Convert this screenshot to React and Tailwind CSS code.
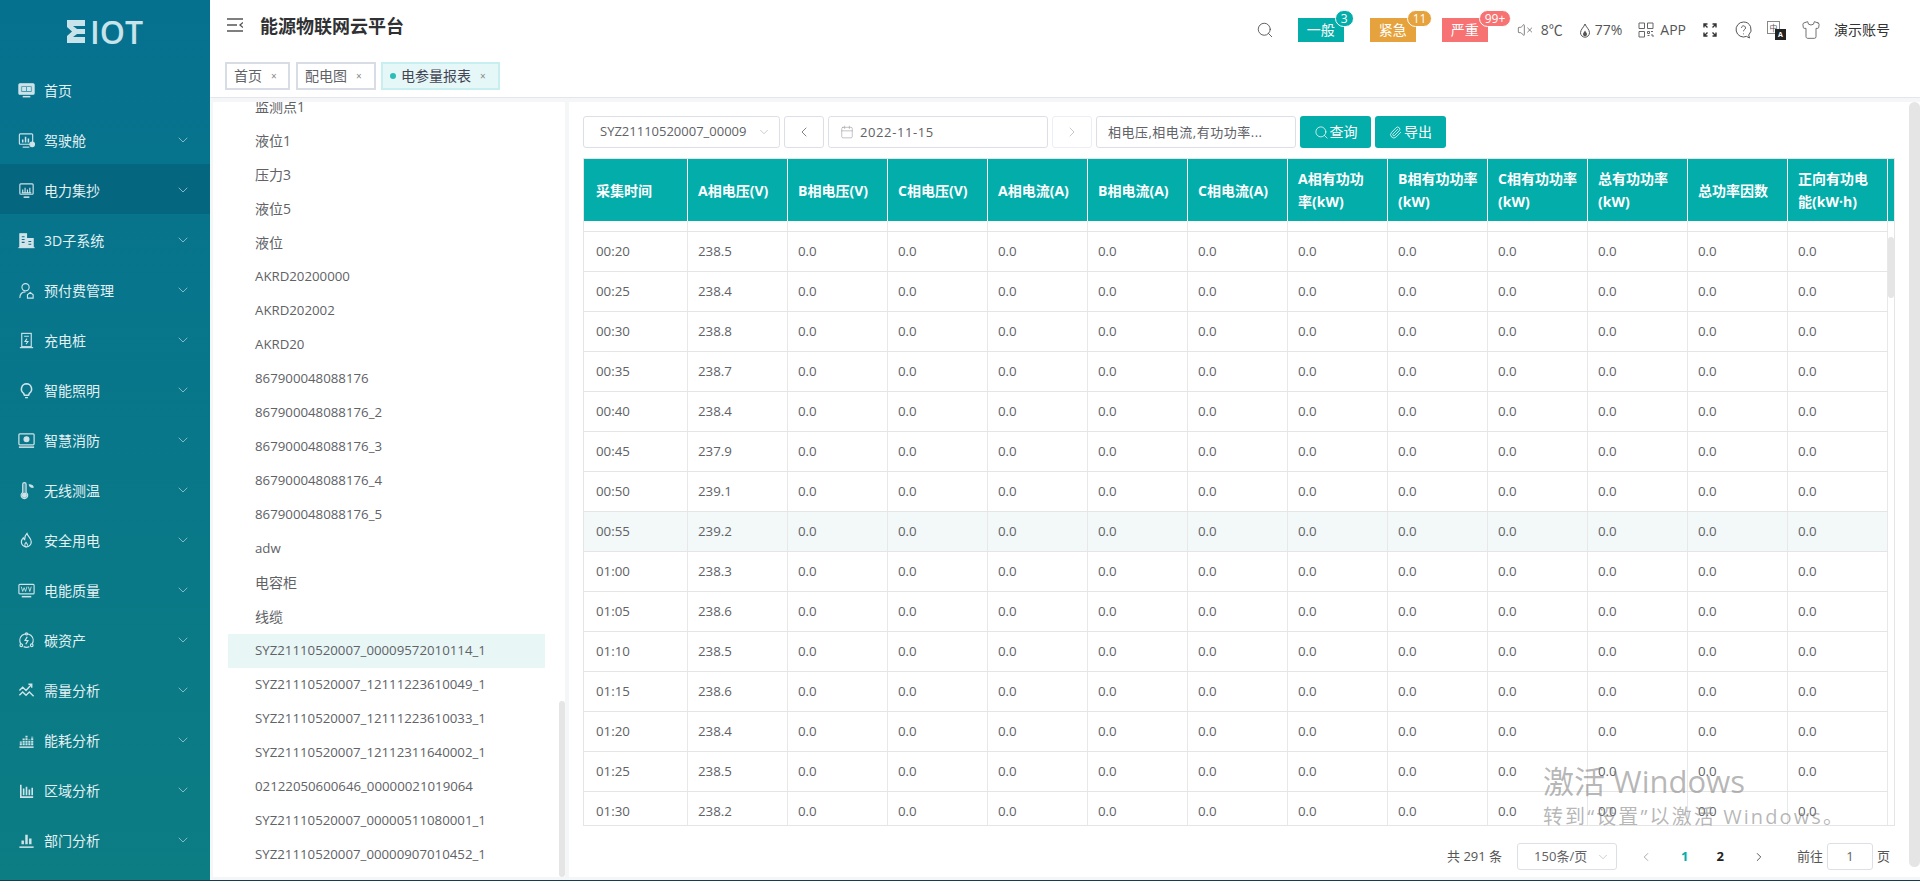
import React from "react";
import { ChevronDown, ChevronLeft, ChevronRight, Calendar, Search, VolumeX, Shirt, Paperclip } from "lucide-react";

const FONT = "font-['Open_Sans','Noto_Sans_CJK_SC',sans-serif]";

const icons = {
  home: (
    <>
      <rect x="2" y="3" width="16" height="11" rx="1" fill="currentColor" />
      <rect x="4" y="5" width="12" height="7" fill="#2b8aa3" />
      <path d="M6 7h3v3H6zM11 7h3v3h-3z" fill="currentColor" />
      <path d="M6 16.500h8" strokeWidth="1.6" />
    </>
  ),
  cockpit: (
    <>
      <rect x="2.500" y="3" width="14" height="11" rx="1" />
      <path d="M6 12V9M9 12V6M12 12V8" strokeWidth="1.6" />
      <circle cx="16" cy="14" r="2.400" fill="currentColor" />
      <path d="M6 17h7" />
    </>
  ),
  meter: (
    <>
      <rect x="3" y="3" width="14" height="11" rx="1" />
      <path d="M6 12V9M8.500 12V7M11 12V9M13.500 12V7M5 12.500h10" />
      <path d="M7 17h6" strokeWidth="1.6" />
    </>
  ),
  building: (
    <>
      <path d="M3 17V3h7v14zM10 17V8h7v9z" fill="currentColor" />
      <path d="M5 6h3M5 9h3M5 12h3M12 11h3M12 14h3" stroke="#0a7089" />
      <path d="M1.500 17.500h17" />
    </>
  ),
  user: (
    <>
      <circle cx="9" cy="6.500" r="3.800" />
      <path d="M3 18c0-4 2.500-6.500 6-6.500" />
      <path d="M11 18v-3.500l3-2.500 3 2.500V18z" />
    </>
  ),
  charger: (
    <>
      <rect x="5" y="2.500" width="10" height="14" />
      <path d="M7.500 5.500h5M10.500 8l-2 3h3l-2 3" />
      <path d="M3 17.500h14" />
    </>
  ),
  bulb: (
    <>
      <path d="M10 3a5.500 5.500 0 0 0-3 10l.8 2h4.400l.8-2a5.500 5.500 0 0 0-3-10z" strokeWidth="1.6" />
      <path d="M8.500 17.500h3" strokeWidth="1.4" />
    </>
  ),
  fire: (
    <>
      <rect x="2" y="3" width="16" height="11.500" rx="1" strokeWidth="1.3" />
      <circle cx="10" cy="8.700" r="2.600" fill="currentColor" />
      <path d="M2 17h16" strokeWidth="1.6" />
    </>
  ),
  temp: (
    <>
      <path d="M6 3.500a1.800 1.800 0 0 1 3.600 0v8.500a3.500 3.500 0 1 1-3.600 0z" fill="currentColor" fillOpacity="0.35" />
      <circle cx="7.800" cy="15" r="2" fill="currentColor" />
      <path d="M13 4c2 0 3.500.8 4 2.500-2 .5-3.500-.5-4-2.500z" fill="currentColor" />
    </>
  ),
  safe: (
    <>
      <path d="M10.500 2.500c.5 3 4.500 4.500 4.500 9a5.200 5.200 0 0 1-10.400 0c0-2 1-3.200 2-4.200.3 1 .7 1.500 1.400 1.800 0-2.600.8-5 2.500-6.600z" strokeWidth="1.3" />
      <path d="M10 17c-2-.5-2.500-3-.5-5 .8 1 2 2 1.500 3.500" strokeWidth="1.1" />
    </>
  ),
  power: (
    <>
      <rect x="2" y="3.500" width="16" height="10" rx="1" />
      <path d="M4.500 6l1.500 5 1.500-4 1.500 4 1.500-5M12 6l1.500 5L15 6" strokeWidth="0.9" />
      <path d="M5 16.500h10" strokeWidth="1.6" />
    </>
  ),
  carbon: (
    <>
      <path d="M4 13.500a7 7 0 1 1 12 0M7 16.500a7 7 0 0 0 6 0" strokeWidth="1.3" />
      <path d="M10.800 6l-2.300 4h3l-2.300 4" strokeWidth="1.3" />
      <circle cx="4.500" cy="15" r="1.400" />
      <circle cx="15.500" cy="15" r="1.400" />
      <circle cx="10" cy="3" r="1.200" />
    </>
  ),
  demand: (
    <path d="M2.500 10l3.500-3.500 3.500 3.500 5.500-6M12 3.500h3.500V7M2.500 15l3.500-3.500 3.500 3.500 3.500-3.500 4.500 4.500" strokeWidth="1.5" />
  ),
  energy: (
    <>
      <path d="M4 15v-4M7 15V8M10 15V5M13 15V9M16 15V6" strokeWidth="2.200" strokeDasharray="2 0.7" />
      <path d="M2.500 17h15" strokeWidth="1.6" />
    </>
  ),
  area: <path d="M4 4v13h13M7 15V8M10 15V6M13 15V9M16 15V7" strokeWidth="1.7" />,
  dept: (
    <>
      <path d="M6 14v-4M10 14V4M14 14V8" strokeWidth="2.600" />
      <path d="M2.500 17h15" strokeWidth="1.600" />
    </>
  ),
};

const menu = [
  ["首页", "home", false],
  ["驾驶舱", "cockpit", true],
  ["电力集抄", "meter", true],
  ["3D子系统", "building", true],
  ["预付费管理", "user", true],
  ["充电桩", "charger", true],
  ["智能照明", "bulb", true],
  ["智慧消防", "fire", true],
  ["无线测温", "temp", true],
  ["安全用电", "safe", true],
  ["电能质量", "power", true],
  ["碳资产", "carbon", true],
  ["需量分析", "demand", true],
  ["能耗分析", "energy", true],
  ["区域分析", "area", true],
  ["部门分析", "dept", true],
];

const treeItems = [
  "监测点1", "液位1", "压力3", "液位5", "液位",
  "AKRD20200000", "AKRD202002", "AKRD20",
  "867900048088176", "867900048088176_2", "867900048088176_3", "867900048088176_4", "867900048088176_5",
  "adw", "电容柜", "线缆",
  "SYZ21110520007_00009572010114_1",
  "SYZ21110520007_12111223610049_1",
  "SYZ21110520007_12111223610033_1",
  "SYZ21110520007_12112311640002_1",
  "02122050600646_00000021019064",
  "SYZ21110520007_00000511080001_1",
  "SYZ21110520007_00000907010452_1",
];

const columns = [
  "采集时间", "A相电压(V)", "B相电压(V)", "C相电压(V)", "A相电流(A)", "B相电流(A)", "C相电流(A)",
  "A相有功功\n率(kW)", "B相有功功率\n(kW)", "C相有功功率\n(kW)", "总有功功率\n(kW)", "总功率因数", "正向有功电\n能(kW·h)",
];

const rows = [
  ["00:20", "238.5"], ["00:25", "238.4"], ["00:30", "238.8"], ["00:35", "238.7"], ["00:40", "238.4"],
  ["00:45", "237.9"], ["00:50", "239.1"], ["00:55", "239.2"], ["01:00", "238.3"], ["01:05", "238.6"],
  ["01:10", "238.5"], ["01:15", "238.6"], ["01:20", "238.4"], ["01:25", "238.5"], ["01:30", "238.2"],
];

const Sidebar = () => (
  <aside className="w-[210px] shrink-0 bg-gradient-to-b from-[#06718f] to-[#0c7d83] text-[#e3f0f4] text-sm">
    <div className="h-[64px] flex items-start pl-[67px] pt-[20px]">
      <svg width="18" height="23" viewBox="0 0 18 23" className="text-[#c8e3ea]">
        <path d="M0 0h18v6H6l4 3h8v5h-8l-4 3h12v6H0v-7l5-4.500L0 7z" fill="currentColor" />
      </svg>
      <span className="ml-[5px] font-semibold text-[32px] leading-[23px] text-[#c8e3ea]">IOT</span>
    </div>
    {menu.map(([label, icon, more]) => (
      <div key={label} className={`h-[50px] flex items-center pl-[17px] pr-[19px] pt-[3px] ${label === "电力集抄" ? "bg-[#05677f]" : ""}`}>
        <svg width="19" height="19" viewBox="0 0 20 20" fill="none" stroke="currentColor" strokeWidth="1.2" className="shrink-0 text-[#cfe3e9]">
          {icons[icon]}
        </svg>
        <span className="ml-[8px] flex-1">{label}</span>
        {more && <ChevronDown size={16} strokeWidth={1.25} className="text-[#9cc7d2] -mt-[1px]" />}
      </div>
    ))}
  </aside>
);

const Badge = ({ label, count, color, className }) => (
  <div className={`relative w-[46px] h-[24px] flex items-center justify-center text-sm text-white ${color} ${className}`}>
    {label}
    <span className={`absolute -top-[8px] left-[37px] h-[17px] min-w-[19px] px-[5px] rounded-full border border-white text-xs leading-[15px] text-center whitespace-nowrap ${color}`}>
      {count}
    </span>
  </div>
);

const TopBar = () => (
  <div className="h-[62px] flex items-start pl-[17px] pr-[30px]">
    <svg width="16" height="14" viewBox="0 0 16 14" fill="none" stroke="#555" strokeWidth="1.3" className="mt-[18px]">
      <path d="M0 1h16M0 7h10M0 13h16M16 4.500L13 7l3 2.500" />
    </svg>
    <h1 className="ml-[17px] mt-[14px] text-lg leading-[24px] font-bold text-[#303133]">能源物联网云平台</h1>
    <div className="ml-auto flex items-center h-[62px] -mt-[1px] text-sm text-[#555]">
      <Search size={18} strokeWidth={1.1} className="text-[#444]" />
      <Badge label="一般" count="3" color="bg-[#03adaa]" className="ml-[24px]" />
      <Badge label="紧急" count="11" color="bg-[#e6a23c]" className="ml-[26px]" />
      <Badge label="严重" count="99+" color="bg-[#f77272]" className="ml-[26px]" />
      <VolumeX size={16} strokeWidth={1.1} className="ml-[29px]" />
      <span className="ml-[8px]">8℃</span>
      <svg width="12" height="15" viewBox="0 0 12 15" fill="none" stroke="#555" className="ml-[16px]">
        <path d="M6 1C5 4 1.500 6.500 1.500 9.700a4.500 4.500 0 0 0 9 0C10.500 6.500 7 4 6 1z" />
        <path d="M6 7.500c-.7 1.500-2 2.300-2 3.700a2 2 0 0 0 4 0C8 9.800 6.700 9 6 7.500z" fill="#555" stroke="none" />
      </svg>
      <span className="ml-[4px]">77%</span>
      <svg width="16" height="16" viewBox="0 0 16 16" fill="none" stroke="#666" className="ml-[16px]">
        <path d="M1 1h5.500v5.500H1zM9.500 1H15v5.500H9.500zM1 9.500h5.500V15H1zM9.500 9.500h2v2h-2zM13 9.500h2M9.500 13.500h2M13 13h2v2" />
      </svg>
      <span className="ml-[6px]">APP</span>
      <svg width="14" height="14" viewBox="0 0 14 14" fill="none" stroke="#333" strokeWidth="1.4" className="ml-[17px]">
        <path d="M1 4.500V1h3.500M1 1l3.500 3.500M13 4.500V1H9.500M13 1L9.500 4.500M1 9.500V13h3.500M1 13l3.500-3.500M13 9.500V13H9.500M13 13L9.500 9.500" />
      </svg>
      <svg width="17" height="18" viewBox="0 0 17 18" fill="none" stroke="#555" className="ml-[18px]">
        <path d="M8.500 1a7.500 7.500 0 1 0 3 14.400l3 1.600-.8-3A7.500 7.500 0 0 0 8.500 1z" />
        <path d="M6.500 6.800a2 2 0 1 1 3 1.800c-.7.400-1 .9-1 1.700M8.500 12.500v.8" />
      </svg>
      <div className="relative ml-[15px] w-[19px] h-[19px]">
        <span className="absolute left-0 top-0 w-[13px] h-[13px] border border-[#888] bg-white text-[8px] leading-[11px] text-center">中</span>
        <span className="absolute right-0 bottom-0 w-[11px] h-[11px] bg-[#222] text-white text-[7px] leading-[11px] font-bold text-center">A</span>
      </div>
      <Shirt size={20} strokeWidth={1} className="ml-[15px]" />
      <span className="ml-[13px] text-[#333]">演示账号</span>
    </div>
  </div>
);

const Tab = ({ label, active, className }) => (
  <div className={`h-[28px] flex items-center px-[7px] text-sm border-2 ${active ? "bg-[#e6f7f7] border-[#c8efef] text-[#445]" : "bg-white border-[#d8dce5] text-[#606266]"} ${className}`}>
    {active && <span className="w-[6px] h-[6px] rounded-full bg-[#2dbdb8] mr-[5px]" />}
    {label}
    <span className="ml-[9px] text-[10px] text-[#888]">×</span>
  </div>
);

const Tree = () => (
  <div className="relative w-[352px] h-full bg-white overflow-hidden">
    <div className="-mt-[12px]">
      {treeItems.map((item) => {
        const latin = /^[\x00-\x7f]+$/.test(item);
        const selected = item === "SYZ21110520007_00009572010114_1";
        return (
          <div key={item} className={`h-[34px] ml-[15px] w-[317px] pl-[27px] flex items-center text-[#606266] whitespace-nowrap ${latin ? "text-[13.25px]" : "text-sm"} ${selected ? "bg-[#e8f6f6]" : ""}`}>
            {item}
          </div>
        );
      })}
    </div>
    <div className="absolute right-0 bottom-0 w-[6px] h-[176px] rounded-full bg-[#e5e5e5]" />
  </div>
);

const Field = ({ className, children }) => (
  <div className={`h-[32px] flex items-center rounded-[3px] border border-[#dcdfe6] bg-white text-[13px] text-[#606266] ${className}`}>
    {children}
  </div>
);

const Toolbar = () => (
  <div className="flex gap-[4px] h-[32px]">
    <Field className="w-[197px] pl-[16px] pr-[8px] justify-between">
      <span>SYZ21110520007_00009</span>
      <ChevronDown size={14} strokeWidth={1} className="text-[#aaa]" />
    </Field>
    <Field className="w-[40px] justify-center">
      <ChevronLeft size={16} strokeWidth={1.2} />
    </Field>
    <Field className="w-[220px] pl-[11px] text-sm">
      <Calendar size={14} strokeWidth={1} className="text-[#999]" />
      <span className="ml-[6px] tracking-[0.6px]">2022-11-15</span>
    </Field>
    <Field className="w-[40px] justify-center border-[#ebeef5]">
      <ChevronRight size={16} strokeWidth={1.2} className="text-[#bbb]" />
    </Field>
    <Field className="w-[200px] pl-[11px] text-sm tracking-[0.5px]">相电压,相电流,有功功率...</Field>
    <button className="w-[71px] rounded-[3px] bg-[#03adaa] text-white text-sm flex items-center justify-center gap-[1px]">
      <Search size={15} strokeWidth={1.2} />
      查询
    </button>
    <button className="w-[71px] rounded-[3px] bg-[#03adaa] text-white text-sm flex items-center justify-center gap-[2px]">
      <Paperclip size={13} strokeWidth={1.4} />
      导出
    </button>
  </div>
);

const DataTable = () => (
  <div className="relative w-[1312px] h-[668px] mt-[10px] border border-[#e5e5e5] overflow-hidden">
    <div className="flex h-[62px] bg-[#03adaa] text-white text-sm font-bold leading-[23px]">
      {columns.map((col, i) => (
        <div key={col} className={`${i === 0 ? "w-[104px] pl-[12px]" : "w-[100px] pl-[10px]"} shrink-0 flex items-center border-r border-white whitespace-pre-line`}>
          {col}
        </div>
      ))}
    </div>
    <div className="h-[11px] w-[1304px] flex border-b border-[#e5e5e5]">
      {columns.map((col, i) => (
        <div key={col} className={`${i === 0 ? "w-[104px]" : "w-[100px]"} shrink-0 border-r border-[#e8e8e8]`} />
      ))}
    </div>
    {rows.map(([time, volt]) => (
      <div key={time} className={`flex w-[1304px] h-[40px] border-b border-[#e5e5e5] text-[13.3px] text-[#606266] ${time === "00:55" ? "bg-[#f3f8f8]" : ""}`}>
        {columns.map((col, i) => (
          <div key={col} className={`${i === 0 ? "w-[104px] pl-[12px]" : "w-[100px] pl-[10px]"} shrink-0 flex items-center border-r border-[#e8e8e8]`}>
            {i === 0 ? time : i === 1 ? volt : "0.0"}
          </div>
        ))}
      </div>
    ))}
    <div className="absolute left-[1304px] top-[78px] w-[6px] h-[61px] rounded-full bg-[#e5e5e5]" />
  </div>
);

const Pagination = () => (
  <div className="w-[1312px] h-[27px] mt-[17px] flex items-center justify-end pr-[5px] text-[13px] text-[#606266]">
    <span className="text-[#555]">共 291 条</span>
    <div className="ml-[15px] w-[100px] h-[27px] flex items-center pl-[16px] pr-[6px] justify-between rounded-[3px] border border-[#dcdfe6]">
      <span>150条/页</span>
      <ChevronDown size={14} strokeWidth={1} className="text-[#aaa]" />
    </div>
    <ChevronLeft size={14} strokeWidth={1.4} className="ml-[22px] text-[#999]" />
    <span className="ml-[28px] font-bold text-[#03adaa]">1</span>
    <span className="ml-[28px] font-bold text-[#222]">2</span>
    <ChevronRight size={14} strokeWidth={1.4} className="ml-[28px] text-[#333]" />
    <span className="ml-[31px] text-[#555]">前往</span>
    <div className="ml-[4px] w-[46px] h-[27px] flex items-center justify-center rounded-[3px] border border-[#dcdfe6]">1</div>
    <span className="ml-[4px] text-[#555]">页</span>
  </div>
);

export default function App() {
  return (
    <div className={`relative w-[1920px] h-[881px] overflow-hidden border-b border-[#1b3a4b] flex ${FONT}`}>
      <Sidebar />
      <div className="flex-1 flex flex-col min-w-0 bg-[#f5f6f8]">
        <header className="h-[98px] shrink-0 bg-white border-b border-[#e4e6ea]">
          <TopBar />
          <div className="flex pl-[15px]">
            <Tab label="首页" className="w-[65px]" />
            <Tab label="配电图" className="w-[80px] ml-[6px]" />
            <Tab label="电参量报表" active className="w-[119px] ml-[5px]" />
          </div>
        </header>
        <div className="flex-1 min-h-0 flex pt-[4px] pb-[3px] pl-[3px]">
          <Tree />
          <div className="relative ml-[4px] flex-1 bg-white pt-[14px] pl-[14px]">
            <Toolbar />
            <DataTable />
            <Pagination />
            <div className="absolute right-0 top-0 w-[11px] h-[765px] rounded-full bg-[#e5e5e5]" />
          </div>
        </div>
      </div>
      <div className="absolute left-[1543px] top-[762px] pointer-events-none text-[#80808090]">
        <div className="text-[31px] leading-[38px]">激活 Windows</div>
        <div className="text-xl tracking-[2.1px] leading-[30px] mt-[2px] whitespace-nowrap">转到“设置”以激活 Windows。</div>
      </div>
    </div>
  );
}
